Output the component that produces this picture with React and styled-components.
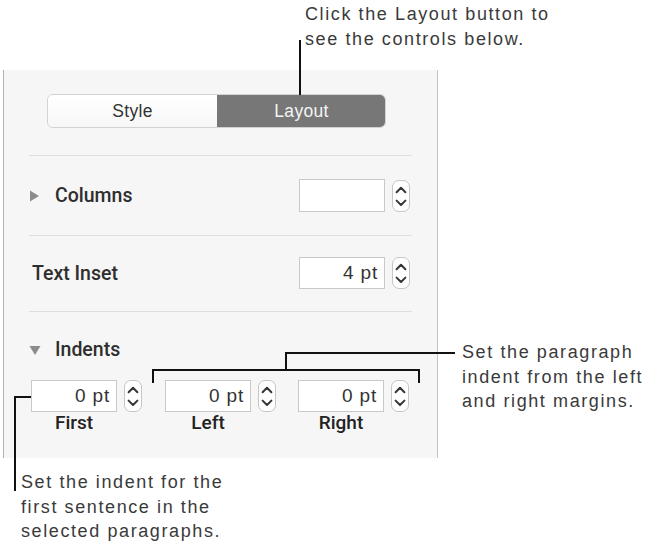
import React from "react";
import styled, { createGlobalStyle } from "styled-components";

const Global = createGlobalStyle`
  html, body { margin: 0; padding: 0; background: #ffffff; }
  body { font-family: "Liberation Sans", Arial, sans-serif; }
`;

const Canvas = styled.div`
  position: relative;
  width: 646px;
  height: 558px;
  overflow: hidden;
  background: #fff;
`;

const Panel = styled.div`
  box-sizing: border-box;
  margin: 70px 0 0 3px;
  width: 435px;
  height: 388px;
  background: #f6f6f6;
  border-left: 1px solid #b3b3b3;
  border-right: 1px solid #c4c4c4;
  padding: 24px 25px 0 25px;
  display: flex;
  flex-direction: column;
`;

const Segmented = styled.div`
  display: flex;
  width: 339px;
  height: 34px;
  margin-left: 18px;
  border-radius: 6px;
  overflow: hidden;
  box-sizing: border-box;
  border: 1px solid #d2d2d2;
`;

const Segment = styled.div`
  flex: 1;
  display: flex;
  align-items: center;
  justify-content: center;
  font-size: 17.5px;
  letter-spacing: 0.3px;
  color: ${(p) => (p.$active ? "#f4f4f4" : "#333")};
  background: ${(p) =>
    p.$active ? "#777777" : "linear-gradient(#ffffff, #f7f7f7)"};
  margin: ${(p) => (p.$active ? "-1px -1px -1px 0" : "0")};
`;

const Separator = styled.div`
  height: 1px;
  background: #dedede;
  margin-top: ${(p) => p.$mt}px;
`;

const Row = styled.div`
  display: flex;
  align-items: center;
  justify-content: space-between;
  margin-top: ${(p) => p.$mt}px;
  padding-right: 2px;
`;

const Label = styled.div`
  display: flex;
  align-items: center;
  font-family: "Roboto", "Liberation Sans", sans-serif;
  font-weight: 500;
  font-size: 19.5px;
  color: #2e2e2e;
  padding-left: ${(p) => p.$pl || 0}px;
`;

const Disclosure = styled.svg`
  width: 12px;
  height: 12px;
  margin-right: 14px;
  flex: none;
`;

const FieldGroup = styled.div`
  display: flex;
  align-items: center;
  gap: 7px;
`;

const Field = styled.div`
  box-sizing: border-box;
  width: 86px;
  height: ${(p) => p.$h || 32}px;
  background: #fff;
  border: 1px solid #c9c9c9;
  display: flex;
  align-items: center;
  justify-content: flex-end;
  padding-right: 6px;
  font-size: 19px;
  letter-spacing: 0.8px;
  color: #333;
`;

const StepperBox = styled.div`
  box-sizing: border-box;
  width: 18px;
  height: 32px;
  background: #fff;
  border: 1px solid #c6c6c6;
  border-radius: 7px;
  display: flex;
  align-items: center;
  justify-content: center;
`;

const Stepper = () => (
  <StepperBox>
    <svg width="16" height="30" viewBox="0 0 16 30">
      <path d="M3.6 11.2 L8 6.8 L12.4 11.2" fill="none" stroke="#363636" strokeWidth="2" strokeLinecap="round" strokeLinejoin="round" />
      <path d="M3.6 19.6 L8 24 L12.4 19.6" fill="none" stroke="#363636" strokeWidth="2" strokeLinecap="round" strokeLinejoin="round" />
    </svg>
  </StepperBox>
);

const IndentGrid = styled.div`
  display: grid;
  grid-template-columns: 134px 133px 118px;
  margin-top: 19px;
  padding-left: 2px;
`;

const IndentCell = styled.div`
  display: flex;
  flex-direction: column;
`;

const SubLabel = styled.div`
  width: 86px;
  text-align: center;
  font-family: "Roboto", "Liberation Sans", sans-serif;
  font-weight: 500;
  font-size: 19px;
  color: #222;
  line-height: 22px;
`;

const Note = styled.div`
  position: absolute;
  left: ${(p) => p.$x}px;
  top: ${(p) => p.$y}px;
  font-family: "Liberation Sans", Arial, sans-serif;
  font-size: 18px;
  line-height: 24.5px;
  letter-spacing: 1.6px;
  color: #3a3a3a;
  white-space: nowrap;
`;

const Leader = styled.div`
  position: absolute;
  left: ${(p) => p.$x}px;
  top: ${(p) => p.$y}px;
  width: ${(p) => p.$w}px;
  height: ${(p) => p.$h}px;
  background: #111;
`;

const RightTri = () => (
  <Disclosure viewBox="0 0 12 12">
    <polygon points="1,0.5 10,6 1,11.5" fill="#8c8c8c" />
  </Disclosure>
);
const DownTri = () => (
  <Disclosure viewBox="0 0 12 12">
    <polygon points="0.5,2 11.5,2 6,11" fill="#8c8c8c" />
  </Disclosure>
);

export default function App() {
  return (
    <>
      <Global />
      <Canvas>
        <Panel>
          <Segmented>
            <Segment>Style</Segment>
            <Segment $active>Layout</Segment>
          </Segmented>
          <Separator $mt={27} />
          <Row $mt={23}>
            <Label>
              <RightTri />
              Columns
            </Label>
            <FieldGroup>
              <Field $h={33} />
              <Stepper />
            </FieldGroup>
          </Row>
          <Separator $mt={23} />
          <Row $mt={21}>
            <Label $pl={3}>Text Inset</Label>
            <FieldGroup>
              <Field>4 pt</Field>
              <Stepper />
            </FieldGroup>
          </Row>
          <Separator $mt={22} />
          <Row $mt={26}>
            <Label>
              <DownTri />
              Indents
            </Label>
          </Row>
          <IndentGrid>
            {["First", "Left", "Right"].map((l) => (
              <IndentCell key={l}>
                <FieldGroup>
                  <Field>0 pt</Field>
                  <Stepper />
                </FieldGroup>
                <SubLabel>{l}</SubLabel>
              </IndentCell>
            ))}
          </IndentGrid>
        </Panel>

        <Note $x={305} $y={2}>
          Click the Layout button to
          <br />
          see the controls below.
        </Note>
        <Leader $x={299} $y={40} $w={2} $h={55} />

        <Note $x={462} $y={340}>
          Set the paragraph
          <br />
          indent from the left
          <br />
          and right margins.
        </Note>
        <Leader $x={285} $y={352} $w={170} $h={2} />
        <Leader $x={285} $y={352} $w={2} $h={19} />
        <Leader $x={152} $y={369} $w={268} $h={2} />
        <Leader $x={152} $y={369} $w={2} $h={14} />
        <Leader $x={418} $y={369} $w={2} $h={14} />

        <Note $x={21} $y={470}>
          Set the indent for the
          <br />
          first sentence in the
          <br />
          selected paragraphs.
        </Note>
        <Leader $x={14} $y={396} $w={17} $h={2} />
        <Leader $x={14} $y={396} $w={2} $h={95} />
      </Canvas>
    </>
  );
}
